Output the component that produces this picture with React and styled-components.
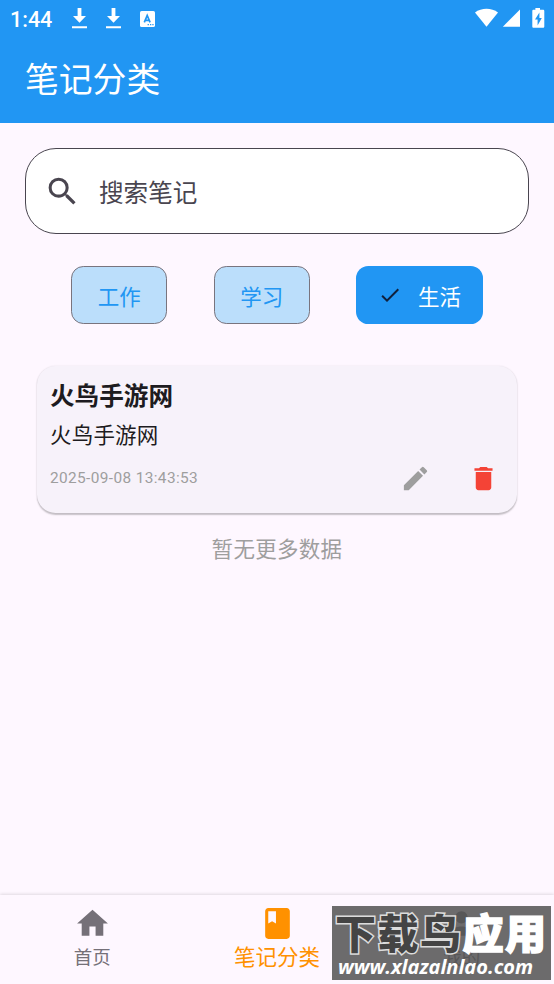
import React from "react";
import styled, { createGlobalStyle } from "styled-components";
import {
  MdCheck,
  MdClass,
  MdDelete,
  MdEdit,
  MdHome,
  MdPerson,
  MdSearch,
} from "react-icons/md";

const App = () => {
  const categories = ["工作", "学习", "生活"];
  const [selected, setSelected] = React.useState("生活");
  const [tab, setTab] = React.useState("笔记分类");
  const tabs = [
    { name: "首页", icon: <MdHome /> },
    { name: "笔记分类", icon: <MdClass /> },
    { name: "我的", icon: <MdPerson /> },
  ];
  return (
    <Screen>
      <GlobalStyle />
      <Header>
        <StatusBar>
          <Clock>1:44</Clock>
          <DownloadIcon />
          <DownloadIcon />
          <KeyboardIcon />
          <SystemIcons />
        </StatusBar>
        <Title>笔记分类</Title>
      </Header>
      <Content>
        <SearchBox>
          <MdSearch />
          <span>搜索笔记</span>
        </SearchBox>
        <Chips>
          {categories.map((name) => (
            <Chip
              key={name}
              $active={name === selected}
              onClick={() => setSelected(name)}
            >
              {name === selected && <MdCheck />}
              {name}
            </Chip>
          ))}
        </Chips>
        <Card>
          <h3>火鸟手游网</h3>
          <p>火鸟手游网</p>
          <CardFooter>
            <time>2025-09-08 13:43:53</time>
            <IconButton $color="#9e9e9e">
              <MdEdit />
            </IconButton>
            <IconButton $color="#f44336">
              <MdDelete />
            </IconButton>
          </CardFooter>
        </Card>
        <Empty>暂无更多数据</Empty>
      </Content>
      <BottomNav>
        {tabs.map((item) => (
          <NavItem
            key={item.name}
            $active={item.name === tab}
            onClick={() => setTab(item.name)}
          >
            {item.icon}
            <span>{item.name}</span>
          </NavItem>
        ))}
      </BottomNav>
      <Watermark>
        <WatermarkName>
          <b>下载鸟</b>应用
        </WatermarkName>
        <WatermarkUrl>www.xlazalnlao.com</WatermarkUrl>
      </Watermark>
    </Screen>
  );
};

const DownloadIcon = () => (
  <svg width="15" height="21" viewBox="0 0 15 21" fill="#fff">
    <path d="M5.6 0h3.8v8h4.6l-6.5 6.8L1 8h4.6zM0 18.3h15v2H0z" />
  </svg>
);

const KeyboardIcon = () => (
  <svg width="15" height="16" viewBox="0 0 15 16">
    <rect width="15" height="16" rx="1.6" fill="#fff" />
    <path
      d="M4.3 11.3 7.2 4.4l2.9 6.9M5.3 9.3h3.8"
      fill="none"
      stroke="#2196f3"
      strokeWidth="1.7"
    />
    <path d="M7.6 13h1.3v1.3H7.6zM10 13h1.3v1.3H10zM12.3 13h1.3v1.3h-1.3z" fill="#2196f3" />
  </svg>
);

const SystemIcons = () => (
  <svg width="70" height="21" viewBox="0 0 70 21" fill="#fff">
    <path d="M0 4.6C6.5-.4 16.500-.4 23 4.600L11.500 18.800z" />
    <path d="M45 1.600v17.200H27.800z" />
    <path d="M60.400 0h4.600v1.800h3c.8 0 1.300.5 1.300 1.300v15.400c0 .8-.5 1.300-1.300 1.300H58.600c-.8 0-1.300-.5-1.300-1.300V3.100c0-.8.5-1.300 1.300-1.300h1.800z" />
    <path d="M64.400 4.500 60 11.600h2.600v5.800l4.200-7.500h-2.400z" fill="#2196f3" />
  </svg>
);

const GlobalStyle = createGlobalStyle`
  * {
    box-sizing: border-box;
  }

  body {
    margin: 0;
    font-family: Roboto, "Noto Sans CJK SC", sans-serif;
    background: #fef7ff;
  }

  h1, h3, p {
    margin: 0;
  }

  button {
    font-family: inherit;
    border: none;
    background: none;
    padding: 0;
    cursor: pointer;
  }
`;

const Screen = styled.div`
  position: relative;
  display: flex;
  flex-direction: column;
  height: 984px;
  overflow: hidden;
  color: #1d1b20;
`;

const Header = styled.header`
  height: 123px;
  background: #2196f3;
  color: #fff;
`;

const StatusBar = styled.div`
  display: flex;
  align-items: center;
  height: 37px;
  padding: 0 9px 0 10px;

  svg {
    flex-shrink: 0;
    margin-right: 19px;
  }

  svg:last-child {
    margin: 0 0 0 auto;
  }
`;

const Clock = styled.span`
  width: 62px;
  font-size: 21.5px;
  font-weight: 500;
  padding-top: 2px;
`;

const Title = styled.h1`
  padding: 0 25px;
  font-size: 33.8px;
  font-weight: 400;
  line-height: 88px;
`;

const Content = styled.main`
  flex: 1;
  padding: 25px 25px 0;
`;

const SearchBox = styled.div`
  display: flex;
  align-items: center;
  height: 86px;
  padding-left: 18px;
  background: #fff;
  border: 1.5px solid #49454f;
  border-radius: 31px;
  color: #49454f;
  font-size: 24.6px;

  svg {
    width: 37px;
    height: 37px;
    margin-right: 18px;
  }
`;

const Chips = styled.div`
  display: flex;
  justify-content: center;
  gap: 46.500px;
  margin-top: 32px;
`;

const Chip = styled.button`
  display: flex;
  align-items: center;
  justify-content: center;
  width: ${(props) => (props.$active ? "126.500px" : "96px")};
  height: 58px;
  border: ${(props) => (props.$active ? "none" : "1.500px solid #79747e")};
  border-radius: 12.300px;
  background: ${(props) => (props.$active ? "#2196f3" : "#bbdefb")};
  color: ${(props) => (props.$active ? "#fff" : "#2196f3")};
  font-size: 21.500px;

  svg {
    width: 24px;
    height: 24px;
    margin-right: 16px;
    color: #10203c;
  }
`;

const Card = styled.section`
  height: 147px;
  margin: 42px 12px 0;
  padding: 13px;
  background: #f7f2fa;
  border-radius: 18.500px;
  box-shadow: 0 1.500px 1.500px rgba(0, 0, 0, 0.22), 0 0 2px rgba(0, 0, 0, 0.08);

  h3 {
    font-size: 24.600px;
    line-height: 36px;
  }

  p {
    font-size: 21.500px;
    line-height: 42px;
    letter-spacing: 0.200px;
  }
`;

const CardFooter = styled.div`
  display: flex;
  align-items: center;
  height: 42px;

  time {
    flex: 1;
    color: #9e9e9e;
    font-size: 15.400px;
    letter-spacing: 0.380px;
  }
`;

const IconButton = styled.button`
  display: flex;
  justify-content: center;
  width: 68px;
  color: ${(props) => props.$color};

  svg {
    width: 31px;
    height: 31px;
  }

  &:last-child {
    margin-right: -13px;
  }
`;

const Empty = styled.p`
  margin-top: 21px;
  color: #9e9e9e;
  font-size: 21.500px;
  line-height: 32px;
  letter-spacing: 0.300px;
  text-align: center;
`;

const BottomNav = styled.nav`
  display: flex;
  height: 89px;
  background: #fef7ff;
  box-shadow: 0 -1px 3px rgba(0, 0, 0, 0.12);
`;

const NavItem = styled.button`
  display: flex;
  flex: 1;
  flex-direction: column;
  align-items: center;
  padding-top: 10px;
  color: ${(props) => (props.$active ? "#ff9100" : "#757078")};
  font-size: ${(props) => (props.$active ? "21.500px" : "18.500px")};
  line-height: 32px;

  svg {
    width: 37px;
    height: 37px;
  }
`;

const Watermark = styled.div`
  position: absolute;
  left: 332px;
  top: 906px;
  width: 219px;
  height: 74px;
  background: rgba(82, 82, 82, 0.850);
  color: #fff;
`;

const WatermarkName = styled.div`
  padding-left: 3px;
  font-size: 41px;
  font-weight: 900;
  line-height: 58px;
  height: 50px;
  letter-spacing: 1.500px;
  white-space: nowrap;
  -webkit-text-stroke: 1.500px #fff;

  b {
    color: #444;
    -webkit-text-stroke: 3px #dcdcdc;
    paint-order: stroke fill;
  }
`;

const WatermarkUrl = styled.div`
  padding-left: 6px;
  font-family: "Open Sans", sans-serif;
  font-size: 20px;
  font-style: italic;
  font-weight: 700;
  line-height: 22px;
  white-space: nowrap;
`;

export default App;
